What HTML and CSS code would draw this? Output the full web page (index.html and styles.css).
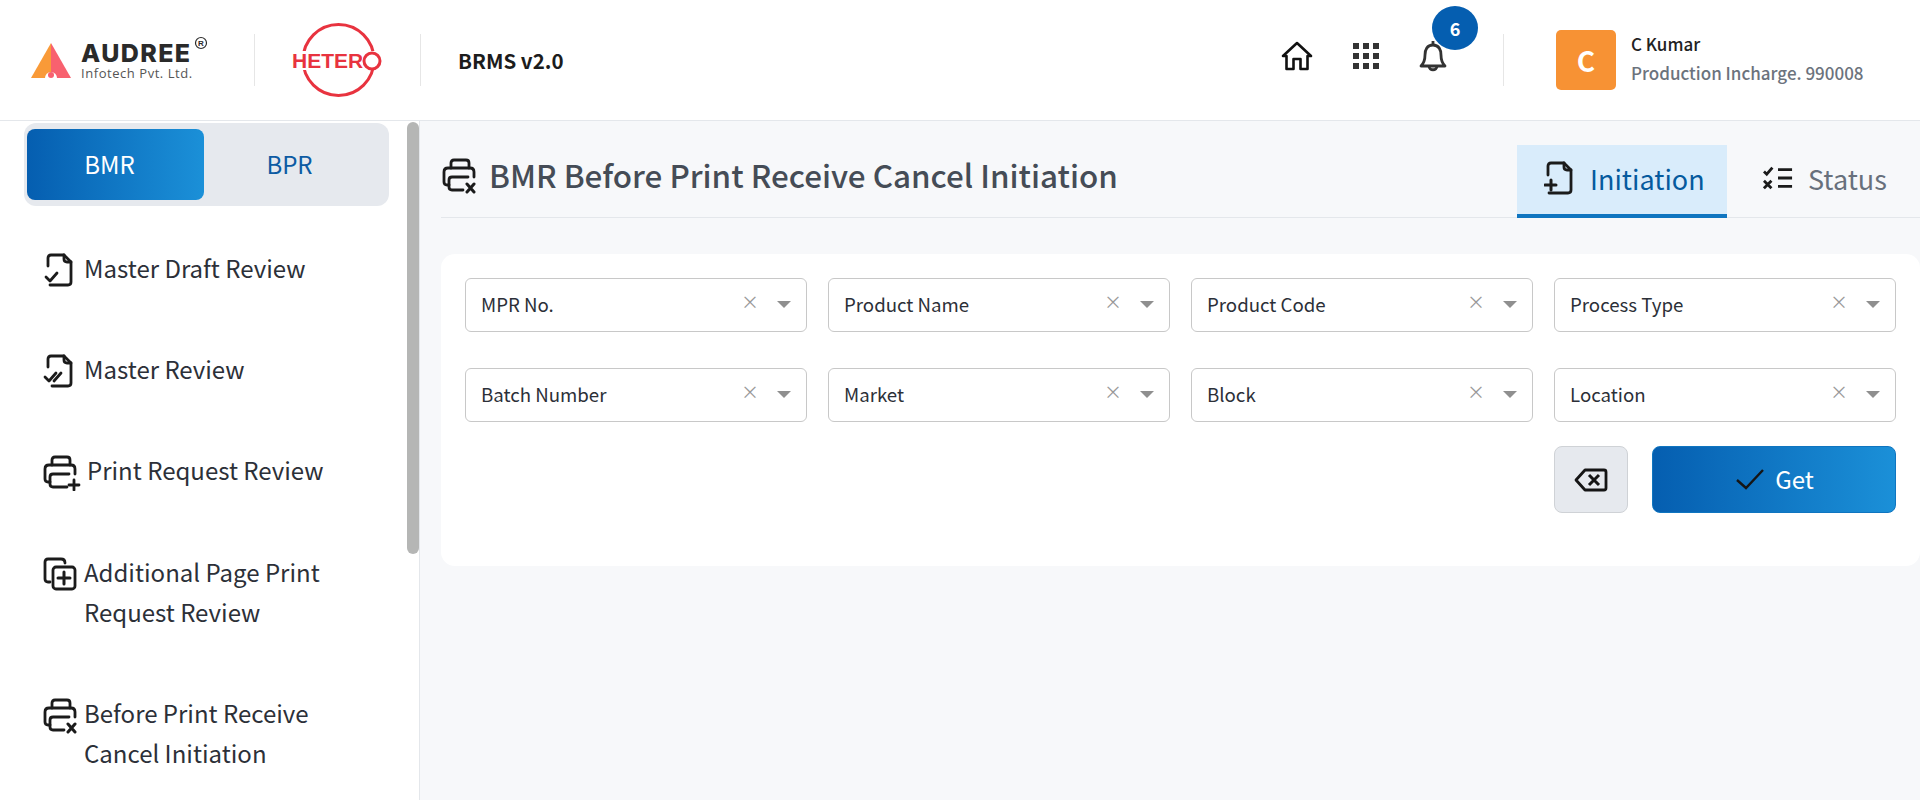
FILE: index.html
```html
<!DOCTYPE html>
<html lang="en">
<head>
    <meta charset="UTF-8">
    <meta name="viewport" content="width=device-width, initial-scale=1.0">
    <title>BRMS v2.0</title>
    <link rel="stylesheet" href="styles.css">
</head>
<body>
<header class="topbar">
    <div class="brand">
        <svg class="logo-audree" width="190" height="60" viewBox="0 0 190 60">
            <path d="M1 48 L21 13 L21 48 Z" fill="#f99a38"/>
            <path d="M21 13 L41 48 L21 48 Z" fill="#f8616f"/>
            <circle cx="21" cy="48" r="6" fill="#fff"/>
            <circle cx="21" cy="45" r="3" fill="#f8616f"/>
            <text x="51" y="32" class="audree-name">AUDREE</text>
            <text x="51" y="48" class="audree-sub">Infotech Pvt. Ltd.</text>
            <circle cx="171" cy="13" r="5.500" fill="none" stroke="#2b2b2b" stroke-width="1.200"/>
            <text x="171" y="16" text-anchor="middle" class="audree-reg">R</text>
        </svg>
        <span class="divider"></span>
        <svg class="logo-hetero" width="96" height="80" viewBox="0 0 96 80">
            <circle cx="46.500" cy="40" r="35.500" fill="none" stroke="#e8333f" stroke-width="3"/>
            <rect x="0" y="31" width="84" height="19" fill="#fff"/>
            <text x="0" y="48" class="hetero-name">HETER</text>
            <circle cx="80" cy="41" r="8" fill="#fff" stroke="#e8333f" stroke-width="3"/>
        </svg>
        <span class="divider"></span>
        <span class="app-name">BRMS v2.0</span>
    </div>
    <div class="top-right">
        <svg class="top-icon home-icon" width="32" height="32" viewBox="0 0 32 32" fill="none" stroke="#111" stroke-width="2.600" stroke-linejoin="round" stroke-linecap="round">
            <path d="M2 16 L16 3 L30 16 L26.500 16 L26.500 29 L19.500 29 L19.500 19 L12.500 19 L12.500 29 L5.500 29 L5.500 16 Z"/>
        </svg>
        <svg class="top-icon grid-icon" width="26" height="26" viewBox="0 0 26 26" fill="#333">
            <rect x="0" y="0" width="6" height="6"/><rect x="10" y="0" width="6" height="6"/><rect x="20" y="0" width="6" height="6"/>
            <rect x="0" y="10" width="6" height="6"/><rect x="10" y="10" width="6" height="6"/><rect x="20" y="10" width="6" height="6"/>
            <rect x="0" y="20" width="6" height="6"/><rect x="10" y="20" width="6" height="6"/><rect x="20" y="20" width="6" height="6"/>
        </svg>
        <div class="bell-wrap">
            <svg width="28" height="34" viewBox="0 0 28 34" fill="none" stroke="#333" stroke-width="2.800" stroke-linejoin="round">
                <path d="M14 1 L14 5"/>
                <path d="M14 5 C8 5 6 10 6 15 C6 20 5 23 2 26 L26 26 C23 23 22 20 22 15 C22 10 20 5 14 5 Z"/>
                <path d="M10 26 C10 31 18 31 18 26"/>
            </svg>
            <span class="badge">6</span>
        </div>
        <span class="divider right-divider"></span>
        <div class="user">
            <div class="avatar">C</div>
            <div class="user-info">
                <div class="user-name">C Kumar</div>
                <div class="user-role">Production Incharge. 990008</div>
            </div>
        </div>
    </div>
</header>

<div class="layout">
    <aside class="sidebar">
        <div class="sidebar-inner">
            <div class="switch">
                <div class="switch-btn active">BMR</div>
                <div class="switch-btn">BPR</div>
            </div>
        </div>
        <ul class="menu">
            <li>
                <svg width="30" height="34" viewBox="-2 0 30 34" fill="none" stroke="#1b1b1b" stroke-width="2.800" stroke-linecap="round" stroke-linejoin="round">
                    <path d="M3 13 L3 5 Q3 2 6 2 L19 2 L26 9 L26 29 Q26 32 23 32 L5 32"/>
                    <path d="M19 2 L19 6 Q19 9 22 9 L26 9"/>
                    <path d="M1 24 L5 28 L12 20"/>
                </svg>
                <span>Master Draft Review</span>
            </li>
            <li>
                <svg width="30" height="34" viewBox="-2 0 30 34" fill="none" stroke="#1b1b1b" stroke-width="2.800" stroke-linecap="round" stroke-linejoin="round">
                    <path d="M3 13 L3 5 Q3 2 6 2 L19 2 L26 9 L26 29 Q26 32 23 32 L7 32"/>
                    <path d="M19 2 L19 6 Q19 9 22 9 L26 9"/>
                    <path d="M0 23 L4 27 L11 19"/>
                    <path d="M9 27 L16 19"/>
                </svg>
                <span>Master Review</span>
            </li>
            <li>
                <svg width="38" height="36" viewBox="0 0 38 36" fill="none" stroke="#1b1b1b" stroke-width="2.800" stroke-linecap="round" stroke-linejoin="round">
                    <path d="M9 10 L9 5 Q9 2 12 2 L24 2 Q27 2 27 5 L27 10"/>
                    <path d="M7 27 L5 27 Q2 27 2 24 L2 14 Q2 10 6 10 L28 10 Q32 10 32 14 L32 19"/>
                    <path d="M26 19 L10 19 Q7 19 7 22 L7 29 Q7 32 10 32 L24 32"/>
                    <path d="M31 25 L31 35 M26 30 L36 30"/>
                </svg>
                <span class="nudge">Print Request Review</span>
            </li>
            <li>
                <svg width="34" height="34" viewBox="0 0 34 34" fill="none" stroke="#1b1b1b" stroke-width="2.800" stroke-linecap="round" stroke-linejoin="round">
                    <path d="M7 25 L5 25 Q2 25 2 22 L2 5 Q2 2 5 2 L18 2 Q22 2 22 6"/>
                    <rect x="10" y="10" width="22" height="22" rx="3"/>
                    <path d="M21 15 L21 27 M15 21 L27 21" stroke-width="3"/>
                </svg>
                <span>Additional Page Print<br>Request Review</span>
            </li>
            <li>
                <svg width="34" height="36" viewBox="0 0 34 36" fill="none" stroke="#1b1b1b" stroke-width="2.800" stroke-linecap="round" stroke-linejoin="round">
                    <path d="M9 10 L9 5 Q9 2 12 2 L24 2 Q27 2 27 5 L27 10"/>
                    <path d="M7 27 L5 27 Q2 27 2 24 L2 14 Q2 10 6 10 L28 10 Q32 10 32 14 L32 19"/>
                    <path d="M26 19 L10 19 Q7 19 7 22 L7 29 Q7 32 10 32 L21 32"/>
                    <path d="M25 26 L32 34 M32 26 L25 34" stroke-width="3"/>
                </svg>
                <span>Before Print Receive<br>Cancel Initiation</span>
            </li>
        </ul>
        <div class="scroll-thumb"></div>
    </aside>

    <main class="content">
        <div class="page-head">
            <div class="page-title">
                <svg width="36" height="36" viewBox="0 0 34 36" fill="none" stroke="#1b1b1b" stroke-width="2.800" stroke-linecap="round" stroke-linejoin="round">
                    <path d="M9 10 L9 5 Q9 2 12 2 L24 2 Q27 2 27 5 L27 10"/>
                    <path d="M7 27 L5 27 Q2 27 2 24 L2 14 Q2 10 6 10 L28 10 Q32 10 32 14 L32 19"/>
                    <path d="M26 19 L10 19 Q7 19 7 22 L7 29 Q7 32 10 32 L21 32"/>
                    <path d="M25 26 L32 34 M32 26 L25 34" stroke-width="3"/>
                </svg>
                <h1>BMR Before Print Receive Cancel Initiation</h1>
            </div>
            <div class="tabs">
                <div class="tab active">
                    <svg width="29" height="34" viewBox="0 0 29 34" fill="none" stroke="#1b1b1b" stroke-width="2.800" stroke-linecap="round" stroke-linejoin="round">
                        <path d="M4 14 L4 5 Q4 2 7 2 L20 2 L27 9 L27 29 Q27 32 24 32 L5 32"/>
                        <path d="M20 2 L20 6 Q20 9 23 9 L27 9"/>
                        <path d="M7 19 L7 29 M1 24 L12 24" stroke-width="3"/>
                    </svg>
                    <span>Initiation</span>
                </div>
                <div class="tab">
                    <svg width="30" height="24" viewBox="0 0 32 24" fill="none" stroke="#1b1b1b" stroke-width="3">
                        <path d="M1 5 L4 8 L10 1"/>
                        <path d="M1 15 L9 23 M9 15 L1 23"/>
                        <path d="M16 3 L31 3 M16 12 L31 12 M16 21 L31 21"/>
                    </svg>
                    <span>Status</span>
                </div>
            </div>
        </div>

        <section class="card">
            <div class="filters">
                <div class="select"><span class="select-label">MPR No.</span><span class="select-clear">&times;</span><span class="select-arrow"></span></div>
                <div class="select"><span class="select-label">Product Name</span><span class="select-clear">&times;</span><span class="select-arrow"></span></div>
                <div class="select"><span class="select-label">Product Code</span><span class="select-clear">&times;</span><span class="select-arrow"></span></div>
                <div class="select"><span class="select-label">Process Type</span><span class="select-clear">&times;</span><span class="select-arrow"></span></div>
                <div class="select"><span class="select-label">Batch Number</span><span class="select-clear">&times;</span><span class="select-arrow"></span></div>
                <div class="select"><span class="select-label">Market</span><span class="select-clear">&times;</span><span class="select-arrow"></span></div>
                <div class="select"><span class="select-label">Block</span><span class="select-clear">&times;</span><span class="select-arrow"></span></div>
                <div class="select"><span class="select-label">Location</span><span class="select-clear">&times;</span><span class="select-arrow"></span></div>
            </div>
            <div class="actions">
                <button class="btn-clear">
                    <svg width="34" height="24" viewBox="0 0 34 24" fill="none" stroke="#151515" stroke-width="2.800" stroke-linejoin="round">
                        <path d="M11 2 L30 2 Q32 2 32 4 L32 20 Q32 22 30 22 L11 22 L2 12 Z"/>
                        <path d="M15 7 L25 17 M25 7 L15 17" stroke-width="3"/>
                    </svg>
                </button>
                <button class="btn-get">
                    <svg width="28" height="22" viewBox="0 0 28 22" fill="none" stroke="#151515" stroke-width="2.400">
                        <path d="M1 12 L10 20 L27 2"/>
                    </svg>
                    <span>Get</span>
                </button>
            </div>
        </section>
    </main>
</div>
</body>
</html>
```

FILE: styles.css
```css
* {
    box-sizing: border-box;
}
html, body {
    height: 100%;
}
body {
    margin: 0;
    font-family: "Noto Sans CJK JP", "Noto Sans", sans-serif;
    background-color: #f7f8fa;
    color: #2c3038;
    overflow: hidden;
}

/* top bar */
.topbar {
    height: 121px;
    background-color: #fff;
    border-bottom: 1px solid #e4e7eb;
    display: flex;
    justify-content: space-between;
    align-items: center;
    padding: 0 0 0 30px;
}
.brand {
    display: flex;
    align-items: center;
}
.logo-audree {
    margin-right: 34px;
}
.audree-name {
    font-family: Inter, "Liberation Sans", sans-serif;
    font-weight: 800;
    font-size: 25px;
    letter-spacing: 1.400px;
    fill: #2a2a2a;
}
.audree-sub {
    font-family: "Open Sans", sans-serif;
    font-size: 13px;
    letter-spacing: 0.55px;
    fill: #555;
}
.audree-reg {
    font-family: "Liberation Sans", sans-serif;
    font-size: 8px;
    font-weight: 700;
    fill: #2b2b2b;
}
.divider {
    width: 1px;
    height: 52px;
    background-color: #e6e6e6;
}
.logo-hetero {
    margin: 0 32px 0 37px;
}
.hetero-name {
    font-family: "Liberation Sans", sans-serif;
    font-weight: 700;
    font-size: 21px;
    fill: #e8333f;
}
.app-name {
    margin-left: 37px;
    font-size: 20.500px;
    font-weight: 600;
    color: #1c1c1c;
}
.top-right {
    display: flex;
    align-items: center;
}
.home-icon {
    margin-right: 40px;
    margin-bottom: 8px;
}
.grid-icon {
    margin-right: 40px;
    margin-bottom: 8px;
}
.bell-wrap {
    position: relative;
    width: 28px;
    height: 34px;
    margin-bottom: 6px;
}
.badge {
    position: absolute;
    top: -34px;
    left: 13px;
    width: 46px;
    height: 44px;
    border-radius: 50%;
    background-color: #055eb0;
    color: #fff;
    font-size: 18px;
    font-weight: 700;
    display: flex;
    align-items: center;
    justify-content: center;
}
.right-divider {
    margin: 0 52px 0 56px;
}
.user {
    display: flex;
    align-items: center;
    gap: 15px;
    width: 364px;
}
.avatar {
    width: 60px;
    height: 60px;
    border-radius: 5px;
    background-color: #f79234;
    color: #fff;
    font-size: 28px;
    font-weight: 600;
    display: flex;
    align-items: center;
    justify-content: center;
}
.user-info {
    margin-top: -2px;
}
.user-name {
    font-size: 17px;
    font-weight: 500;
    color: #222;
    line-height: 28px;
}
.user-role {
    font-size: 17px;
    font-weight: 500;
    color: #6c737d;
    line-height: 30px;
}

/* sidebar */
.layout {
    display: flex;
    height: 679px;
}
.sidebar {
    position: relative;
    width: 420px;
    flex-shrink: 0;
    background-color: #fff;
    border-right: 1px solid #e4e7eb;
    overflow: hidden;
}
.sidebar-inner {
    padding: 2px 0 0 24px;
}
.scroll-thumb {
    position: absolute;
    top: 1px;
    right: 0;
    width: 12px;
    height: 432px;
    background-color: #b5b6b5;
    border-radius: 6px;
}
.switch {
    width: 365px;
    height: 83px;
    background-color: #e6e9ee;
    border-radius: 12px;
    padding: 6px 3px;
    display: flex;
}
.switch-btn {
    width: 177px;
    height: 71px;
    border-radius: 8px;
    font-size: 24px;
    color: #0d5ba3;
    display: flex;
    align-items: center;
    justify-content: center;
    padding-right: 6px;
    padding-bottom: 2px;
}
.switch-btn.active {
    background: linear-gradient(90deg, #055eb0, #1b90d8);
    color: #fff;
    padding-right: 12px;
}
.menu {
    list-style: none;
    margin: 42px 0 0;
    padding: 0 0 0 43px;
    display: flex;
    flex-direction: column;
    gap: 61px;
}
.menu li {
    display: grid;
    grid-template-columns: 41px 1fr;
    font-size: 24px;
    line-height: 40px;
    color: #2c3038;
}
.menu svg {
    margin-top: 5px;
}
.nudge {
    margin-left: 3px;
}

/* page */
.content {
    flex: 1;
    min-width: 0;
    padding-left: 21px;
}
.page-head {
    height: 97px;
    border-bottom: 1px solid #e4e7eb;
    display: flex;
    justify-content: space-between;
    align-items: flex-end;
}
.page-title {
    display: flex;
    align-items: center;
    gap: 12px;
    align-self: flex-start;
    margin-top: 32px;
}
.page-title h1 {
    margin: 0 0 2px;
    font-size: 31.400px;
    font-weight: 500;
    color: #454c56;
    line-height: 44px;
}
.tabs {
    display: flex;
    margin-bottom: -1px;
}
.tab {
    width: 193px;
    height: 73px;
    display: flex;
    align-items: center;
    gap: 15px;
    font-size: 27px;
    color: #68707c;
    padding: 0 0 3px 36px;
    border-bottom: 4px solid transparent;
}
.tab.active {
    width: 210px;
    padding: 0 0 3px 27px;
    background-color: #d9ecfb;
    color: #055a9e;
    border-bottom-color: #0f75c0;
    gap: 17px;
}
.card {
    margin-top: 36px;
    height: 312px;
    background-color: #fff;
    border-radius: 14px;
    padding: 24px 24px 0 24px;
}
.filters {
    display: grid;
    grid-template-columns: repeat(4, 1fr);
    column-gap: 21px;
    row-gap: 36px;
}
.select {
    height: 54px;
    border: 1px solid #c8c8c8;
    border-radius: 6px;
    padding: 0 15px 0 15px;
    display: flex;
    align-items: center;
    font-size: 18.660px;
    color: #2c3038;
}
.select-label {
    flex: 1;
    margin-top: -4px;
}
.select-clear {
    color: #999;
    font-size: 18px;
    line-height: 1;
    margin-right: 18px;
    margin-top: -8px;
}
.select-arrow {
    width: 0;
    height: 0;
    border-left: 7px solid transparent;
    border-right: 7px solid transparent;
    border-top: 7px solid #8f8f8f;
    margin-top: -2px;
}
.actions {
    display: flex;
    justify-content: flex-end;
    gap: 24px;
    margin-top: 24px;
}
.btn-clear {
    width: 74px;
    height: 67px;
    background-color: #e6e9ee;
    border: 1px solid #cfd2d6;
    border-radius: 8px;
    display: flex;
    align-items: center;
    justify-content: center;
    padding: 0;
}
.btn-get {
    width: 244px;
    height: 67px;
    background: linear-gradient(90deg, #055eb0, #1b90d8);
    border: 1px solid #0f75c0;
    border-radius: 8px;
    color: #fff;
    font-family: inherit;
    font-size: 24px;
    display: flex;
    align-items: center;
    justify-content: center;
    gap: 11px;
    padding: 0 0 2px 2px;
}
```
